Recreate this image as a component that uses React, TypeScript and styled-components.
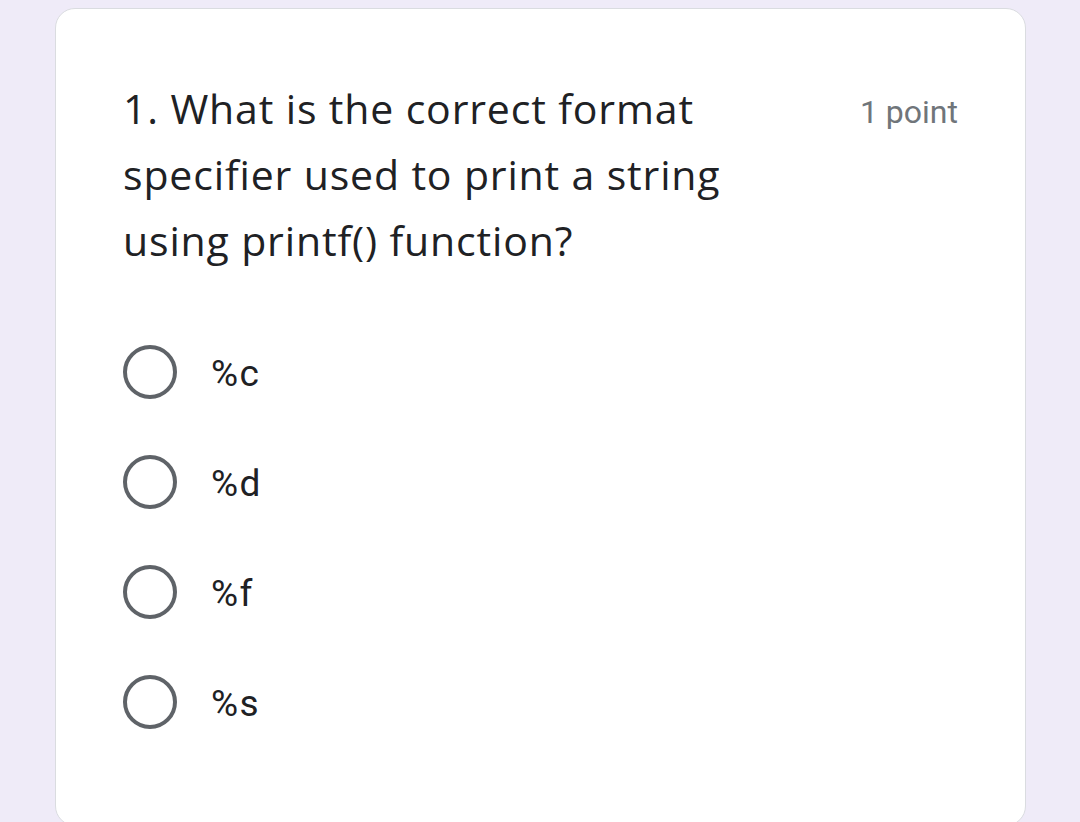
import React from "react";
import styled, { createGlobalStyle } from "styled-components";

const Global = createGlobalStyle`
  html, body { margin: 0; padding: 0; background: #efebf8; }
  body { height: 822px; overflow: hidden; }
  #root { height: 822px; }
`;

const Page = styled.div`
  height: 822px;
  box-sizing: border-box;
  padding: 8px 54px 0 55px;
  display: flex;
  flex-direction: column;
`;

const Card = styled.section`
  flex: 1;
  margin-bottom: -4px;
  background: #ffffff;
  border: 1.5px solid #dadce0;
  border-radius: 20px;
  box-sizing: border-box;
  padding: 66px 67px 0 67px;
  display: flex;
  flex-direction: column;
`;

const Header = styled.div`
  display: flex;
  justify-content: space-between;
  align-items: flex-start;
`;

const Question = styled.h2`
  margin: 0;
  font-family: "Open Sans", "Noto Sans", sans-serif;
  font-weight: 400;
  font-size: 41px;
  letter-spacing: 0.85px;
  line-height: 66px;
  color: #202124;
`;

const Points = styled.span`
  font-family: Roboto, "Liberation Sans", sans-serif;
  font-size: 32px;
  color: #70757a;
  line-height: 66px;
  padding-top: 4px;
`;

const Options = styled.div`
  margin-top: 44px;
  display: flex;
  flex-direction: column;
`;

const Option = styled.label`
  height: 110px;
  display: flex;
  align-items: center;
  gap: 34px;
`;

const Radio = styled.span`
  width: 54px;
  height: 54px;
  box-sizing: border-box;
  border: 4px solid #5f6368;
  border-radius: 50%;
  flex: none;
`;

const OptionText = styled.span`
  font-family: Roboto, "Liberation Sans", sans-serif;
  font-size: 37px;
  letter-spacing: 1.5px;
  color: #202124;
  padding-top: 2px;
`;

const options = ["%c", "%d", "%f", "%s"];

export default function App() {
  return (
    <>
      <Global />
      <Page>
        <Card>
          <Header>
            <Question>
              1. What is the correct format
              <br />
              specifier used to print a string
              <br />
              using printf() function?
            </Question>
            <Points>1 point</Points>
          </Header>
          <Options>
            {options.map((o) => (
              <Option key={o}>
                <Radio />
                <OptionText>{o}</OptionText>
              </Option>
            ))}
          </Options>
        </Card>
      </Page>
    </>
  );
}
